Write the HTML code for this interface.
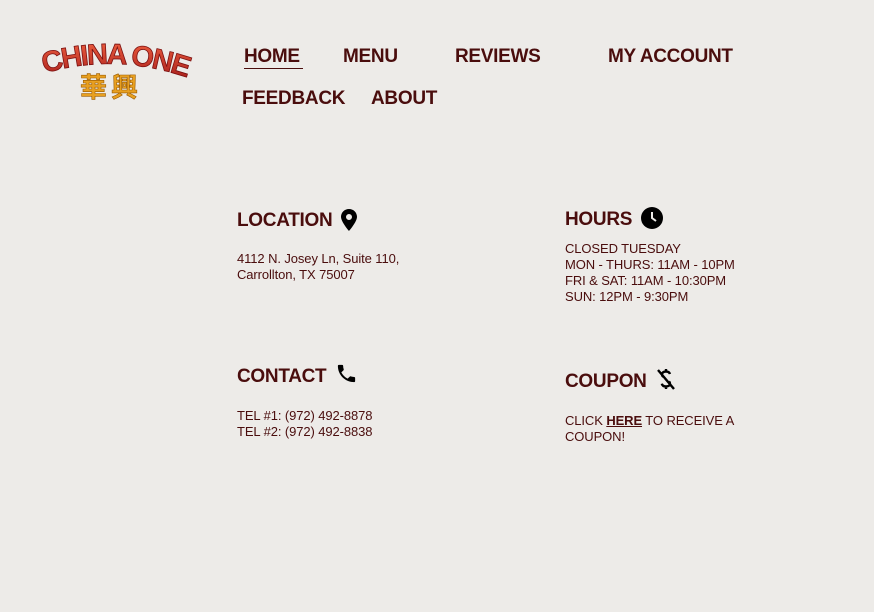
<!DOCTYPE html>
<html><head><meta charset="utf-8"><style>
body{margin:0;width:874px;height:612px;background:#edebe8;font-family:"Liberation Sans",sans-serif;color:#4a0d0d;position:relative;overflow:hidden}
.a{position:absolute;white-space:nowrap}
.nav{font-size:19px;font-weight:bold;letter-spacing:-0.3px}
.h{font-size:19px;font-weight:bold;letter-spacing:-0.3px}
.t{font-size:13px;line-height:16px;letter-spacing:-0.1px}
svg{position:absolute}
</style></head><body>
<svg style="left:30px;top:30px" width="170" height="76" viewBox="0 0 170 76">
<defs><linearGradient id="r" x1="0" y1="0" x2="0" y2="1"><stop offset="0" stop-color="#f06040"/><stop offset="1" stop-color="#a01818"/></linearGradient>
<path id="arc" d="M6 46 Q84 20 164 50"/></defs>
<text style="font-family:'Liberation Sans',sans-serif;font-weight:bold;font-size:29px" fill="url(#r)" stroke="#7a1010" stroke-width="0.8" letter-spacing="-2"><textPath href="#arc" startOffset="50%" text-anchor="middle">CHINA ONE</textPath></text>
<text x="81" y="67" text-anchor="middle" style="font-family:'Noto Sans CJK SC',sans-serif;font-weight:bold;font-size:27px" fill="#e8a020" stroke="#9a5a00" stroke-width="0.6" letter-spacing="4">華興</text>
</svg>
<div class="a nav" style="left:244px;top:46px">HOME</div>
<div class="a" style="left:244px;top:68px;width:59px;border-top:1px solid #4a0d0d"></div>
<div class="a nav" style="left:343px;top:46px">MENU</div>
<div class="a nav" style="left:455px;top:46px">REVIEWS</div>
<div class="a nav" style="left:608px;top:46px">MY ACCOUNT</div>
<div class="a nav" style="left:242px;top:88px">FEEDBACK</div>
<div class="a nav" style="left:371px;top:88px">ABOUT</div>

<div class="a h" style="left:237px;top:210px">LOCATION</div>
<svg style="left:341px;top:209px" width="16" height="22" viewBox="0 0 16 22"><path d="M8 0C3.6 0 0 3.4 0 7.8 0 13 8 22 8 22s8-9 8-14.2C16 3.4 12.4 0 8 0zm0 11a3 3 0 110-6 3 3 0 010 6z" fill="#000"/></svg>
<div class="a t" style="left:237px;top:251px">4112 N. Josey Ln, Suite 110,<br>Carrollton, TX 75007</div>

<div class="a h" style="left:565px;top:209px">HOURS</div>
<svg style="left:641px;top:207px" width="22" height="22" viewBox="0 0 22 22"><circle cx="11" cy="11" r="11" fill="#000"/><path d="M11 5v6l4 3" stroke="#edebe8" stroke-width="2" fill="none"/></svg>
<div class="a t" style="left:565px;top:241px">CLOSED TUESDAY<br>MON - THURS: 11AM - 10PM<br>FRI &amp; SAT: 11AM - 10:30PM<br>SUN: 12PM - 9:30PM</div>

<div class="a h" style="left:237px;top:366px">CONTACT</div>
<svg style="left:335px;top:362px" width="23" height="23" viewBox="0 0 24 24"><path d="M6.6 10.8c1.4 2.8 3.8 5.1 6.6 6.6l2.2-2.2c.3-.3.7-.4 1-.2 1.1.4 2.3.6 3.6.6.6 0 1 .4 1 1V20c0 .6-.4 1-1 1C10.6 21 3 13.4 3 4c0-.6.4-1 1-1h3.5c.6 0 1 .4 1 1 0 1.3.2 2.5.6 3.6.1.3 0 .7-.2 1L6.6 10.8z" fill="#000"/></svg>
<div class="a t" style="left:237px;top:408px">TEL #1: (972) 492-8878<br>TEL #2: (972) 492-8838</div>

<div class="a h" style="left:565px;top:371px">COUPON</div>
<svg style="left:655px;top:368px" width="22" height="23" viewBox="0 0 22 23"><path d="M15 6c-.5-1.5-2-2.5-4-2.5-2.5 0-4 1.2-4 3 0 1 .5 1.8 1.5 2.3M14 13.5c.6.5 1 1.1 1 2 0 1.8-1.7 3-4 3-2.3 0-3.8-1.1-4.2-2.8M11 1v3M11 18v3M3 2l16 19" stroke="#000" stroke-width="2.4" fill="none"/></svg>
<div class="a t" style="left:565px;top:413px">CLICK <b style="text-decoration:underline">HERE</b> TO RECEIVE A<br>COUPON!</div>
</body></html>
